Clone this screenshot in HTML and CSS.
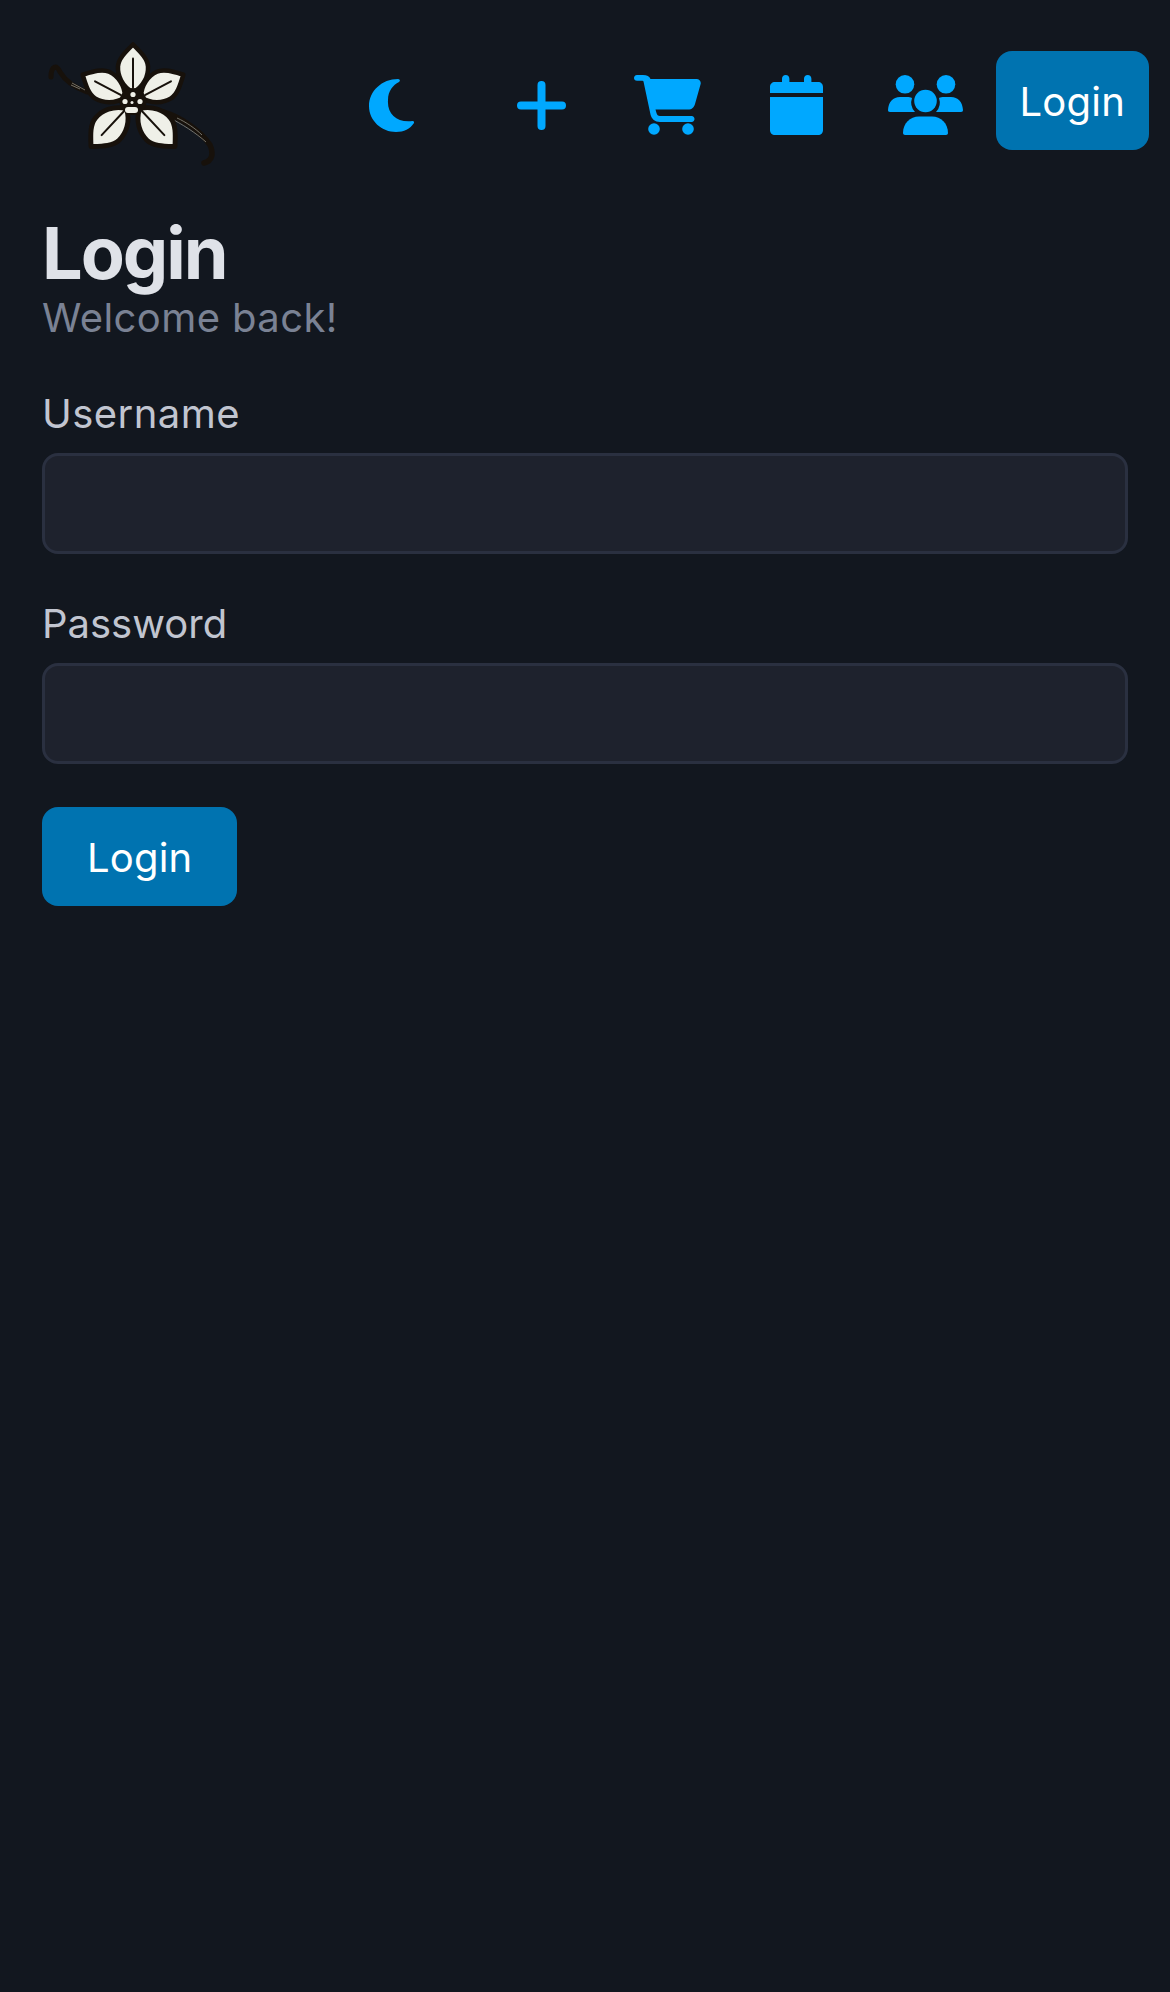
FILE: index.html
```html
<!DOCTYPE html>
<html lang="en">
<head>
    <meta charset="UTF-8">
    <meta name="viewport" content="width=device-width, initial-scale=1.0">
    <title>Login</title>
    <link rel="stylesheet" href="styles.css">
</head>
<body>
    <nav class="navbar">
        <a href="#" class="logo" aria-label="Home">
            <svg viewBox="0 0 200 150" width="200" height="150">
                <defs>
                    <path id="petal" d="M0 -9 C-11 -15 -15.500 -26 -15 -35 C-14.500 -43 -7 -50 0 -57 C7 -50 14.500 -43 15 -35 C15.500 -26 11 -15 0 -9 Z"/>
                </defs>
                <!-- vanilla pod -->
                <path d="M21 47 C21 36 27 34 30 42 C36 52 46 58 57 62" class="pod" stroke-width="5"/>
                <path d="M133 82 C150 87 170 100 180 115 C184 124 182 131 174 133" class="pod" stroke-width="5.500"/>
                <path d="M42 53 L55 60 M41 55 L50 59" class="pod-line"/>
                <path d="M138 87 C152 94 166 103 176 112 M147 88 C156 92 166 99 172 105" class="pod-line"/>
                <!-- flower, drawn round its centre -->
                <g transform="translate(103 71.500)">
                    <g class="petal">
                        <use href="#petal"/>
                        <use href="#petal" transform="rotate(62)"/>
                        <use href="#petal" transform="rotate(-62)"/>
                        <use href="#petal" transform="rotate(137) scale(1.080)"/>
                        <use href="#petal" transform="rotate(-137) scale(1.080)"/>
                    </g>
                    <g class="vein">
                        <path d="M0 -14 V-43"/>
                        <path d="M0 -14 V-43" transform="rotate(62)"/>
                        <path d="M0 -14 V-43" transform="rotate(-62)"/>
                        <path d="M0 -14 V-46" transform="rotate(137)"/>
                        <path d="M0 -14 V-46" transform="rotate(-137)"/>
                    </g>
                    <circle r="13.500" class="core"/>
                    <g class="dots">
                        <circle cy="-7" r="2.600"/>
                        <circle cx="-8" r="2.600"/>
                        <circle cx="-1" cy="1" r="1.500"/>
                        <circle cx="7" r="2.600"/>
                        <rect x="-8" y="5.500" width="13" height="6" rx="3"/>
                    </g>
                </g>
            </svg>
        </a>
        <div class="nav-links">
            <a href="#" class="nav-icon moon" aria-label="Theme">
                <svg viewBox="0 0 45 53" width="45" height="53"><path d="M29 0 C13 0 0 12 0 27 C0 42 13 53 27 53 C35 53 41 50 45 44 C45.500 43 45 42 43.500 42 C28 44 18 35 19 21 C19 12 24 6 30 3 C31.500 2 31 0 29 0 Z"/></svg>
            </a>
            <a href="#" class="nav-icon plus" aria-label="Add">
                <svg viewBox="0 0 49 49" width="49" height="49"><path d="M24.500 4 V45 M4 24.500 H45"/></svg>
            </a>
            <a href="#" class="nav-icon cart" aria-label="Cart">
                <svg viewBox="0 0 67 60" width="67" height="60">
                    <path d="M3 0 H9 C13 0 15.500 1.500 16.500 4 H62.500 C65.500 4 67.500 6.500 66.500 9.500 L61 29 C60 32.500 58 34.500 54 34.500 H21.500 L22.500 38 C23 40 24 41 26 41 H57.500 C59.500 41 60.500 42.500 60.500 44 C60.500 45.500 59.500 47 57.500 47 H26 C21 47 17.500 44 16.500 39.500 L9.500 6.500 C9.300 6 9 5.800 8.500 5.800 H3 C1 5.800 0 4.500 0 3 C0 1.500 1 0 3 0 Z"/>
                    <circle cx="20" cy="54" r="5.800"/>
                    <circle cx="54" cy="54" r="5.800"/>
                </svg>
            </a>
            <a href="#" class="nav-icon calendar" aria-label="Calendar">
                <svg viewBox="0 0 53 60" width="53" height="60">
                    <path d="M12 7 V3.700 C12 1.500 13.500 0 15.700 0 C17.900 0 19.400 1.500 19.400 3.700 V7 H34 V3.700 C34 1.500 35.500 0 37.700 0 C39.900 0 41.400 1.500 41.400 3.700 V7 H48 C51 7 53 9 53 12 V18 H0 V12 C0 9 2 7 5 7 Z"/>
                    <path d="M0 22 H53 V55 C53 58 51 60 48 60 H5 C2 60 0 58 0 55 Z"/>
                </svg>
            </a>
            <a href="#" class="nav-icon users" aria-label="Users">
                <svg viewBox="0 0 75 60" width="75" height="60">
                    <circle cx="17" cy="9.300" r="9.300"/>
                    <circle cx="58" cy="9.300" r="9.300"/>
                    <path d="M12 22 H19 C21 22 22.500 22.300 24 23 A14 14 0 0 0 27 37 H2 C0.500 37 0 36 0 35 C0.500 27 5 22 12 22 Z"/>
                    <path d="M63 22 H56 C54 22 52.500 22.300 51 23 A14 14 0 0 1 48 37 H73 C74.500 37 75 36 75 35 C74.500 27 70 22 63 22 Z"/>
                    <circle cx="37.500" cy="26" r="11.300"/>
                    <path d="M31 41.500 H44 C53 41.500 60 48.500 60 58 C60 59.300 59 60 58 60 H17 C16 60 15 59.300 15 58 C15 48.500 22 41.500 31 41.500 Z"/>
                </svg>
            </a>
            <a href="#" class="btn btn-nav">Login</a>
        </div>
    </nav>

    <main class="content">
        <h1>Login</h1>
        <p class="subtitle">Welcome back!</p>

        <form class="login-form">
            <div class="field">
                <label for="username" class="label-wide">Username</label>
                <input type="text" id="username">
            </div>
            <div class="field">
                <label for="password">Password</label>
                <input type="password" id="password">
            </div>
            <button type="button" class="btn btn-submit">Login</button>
        </form>
    </main>
</body>
</html>
```

FILE: styles.css
```css
body {
    margin: 0;
    min-height: 1992px;
    background: #12171f;
    font-family: Inter, "Liberation Sans", sans-serif;
    color: #e2e5ea;
}

a {
    text-decoration: none;
}

.navbar {
    display: flex;
    justify-content: space-between;
    padding: 30px 21px 0 30px;
    height: 150px;
}

.logo {
    display: block;
    width: 200px;
    height: 150px;
}

.nav-links {
    display: flex;
    align-items: center;
    height: 141px;
}

.nav-icon {
    display: flex;
    margin-top: 9px;
    fill: #00a8ff;
}

.moon { margin-right: 103px; }
.plus { margin-right: 68px; }
.cart { margin-right: 69px; }
.calendar { margin-right: 65px; }
.users { margin-right: 33px; }

.plus svg path {
    fill: none;
    stroke: #00a8ff;
    stroke-width: 8;
    stroke-linecap: round;
}

.btn {
    display: block;
    border: 0;
    border-radius: 16px;
    background: #0073b0;
    color: #fff;
    font-family: inherit;
    font-size: 40px;
    line-height: 50px;
    letter-spacing: 0.2px;
}

.btn-nav {
    padding: 26px 24px 23px;
}

.content {
    padding: 33px 42px 0;
}

h1 {
    margin: 0;
    font-size: 72px;
    font-weight: 700;
    line-height: 80px;
    letter-spacing: -2px;
    color: #dfe2e8;
}

.subtitle {
    margin: 0 0 46px;
    font-size: 40px;
    line-height: 50px;
    letter-spacing: 0.4px;
    color: #7a8294;
}

.field {
    margin-bottom: 45px;
}

.field:last-of-type {
    margin-bottom: 43px;
}

label {
    display: block;
    margin-bottom: 14px;
    font-size: 40px;
    line-height: 50px;
    color: #c1c5d0;
}

.label-wide {
    letter-spacing: 0.45px;
}

input {
    display: block;
    box-sizing: border-box;
    width: 100%;
    height: 101px;
    border: 3px solid #2a3040;
    border-radius: 16px;
    background: #1e222d;
    color: #e2e5ea;
    font-size: 40px;
}

.btn-submit {
    padding: 26px 45px 23px;
}

.logo svg .pod {
    fill: none;
    stroke: #17110b;
    stroke-linecap: round;
}

.logo svg .pod-line {
    fill: none;
    stroke: #8d8a80;
    stroke-width: 0.8;
}

.logo svg .petal {
    fill: #eff0e8;
    stroke: #17110b;
    stroke-width: 4.500;
    stroke-linejoin: round;
}

.logo svg .vein {
    fill: none;
    stroke: #17110b;
    stroke-width: 2;
    stroke-linecap: round;
}

.logo svg .core {
    fill: #17110b;
}

.logo svg .dots {
    fill: #eff0e8;
}
```
